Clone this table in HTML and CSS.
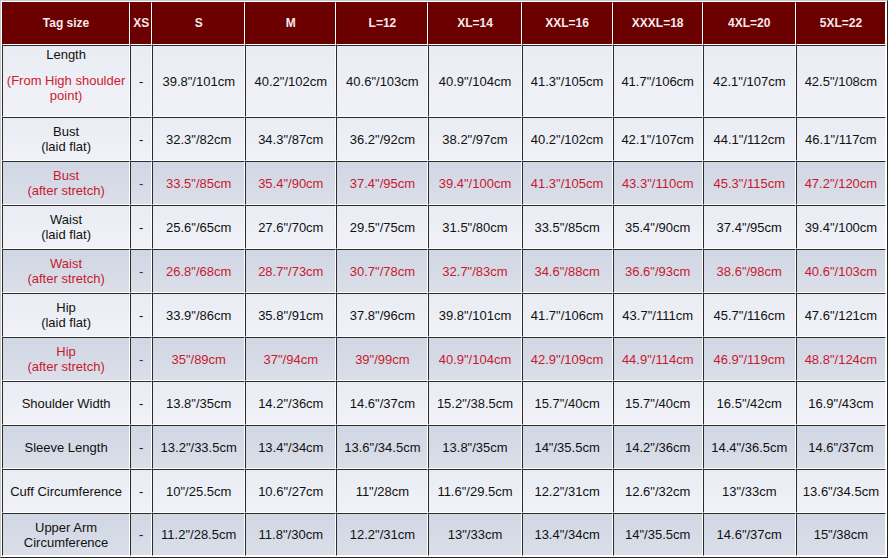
FILE: index.html
```html
<!DOCTYPE html>
<html>
<head>
<meta charset="utf-8">
<link rel="stylesheet" href="styles.css">
</head>
<body>
<table class="size-table">
  <colgroup>
    <col class="c-label"><col class="c-xs"><col class="c-93"><col class="c-91"><col class="c-92"><col class="c-93"><col class="c-91"><col class="c-90"><col class="c-93"><col class="c-90">
  </colgroup>
  <thead>
    <tr class="head">
      <th>Tag size</th><th>XS</th><th>S</th><th>M</th><th>L=12</th><th>XL=14</th><th>XXL=16</th><th>XXXL=18</th><th>4XL=20</th><th>5XL=22</th>
    </tr>
  </thead>
  <tbody>
    <tr class="light tall">
      <td class="length">Length<span class="note">(From High shoulder point)</span></td><td>-</td>
      <td>39.8"/101cm</td><td>40.2"/102cm</td><td>40.6"/103cm</td><td>40.9"/104cm</td><td>41.3"/105cm</td><td>41.7"/106cm</td><td>42.1"/107cm</td><td>42.5"/108cm</td>
    </tr>
    <tr class="light">
      <td>Bust<br>(laid flat)</td><td>-</td>
      <td>32.3"/82cm</td><td>34.3"/87cm</td><td>36.2"/92cm</td><td>38.2"/97cm</td><td>40.2"/102cm</td><td>42.1"/107cm</td><td>44.1"/112cm</td><td>46.1"/117cm</td>
    </tr>
    <tr class="dark red">
      <td>Bust<br>(after stretch)</td><td class="dash">-</td>
      <td>33.5"/85cm</td><td>35.4"/90cm</td><td>37.4"/95cm</td><td>39.4"/100cm</td><td>41.3"/105cm</td><td>43.3"/110cm</td><td>45.3"/115cm</td><td>47.2"/120cm</td>
    </tr>
    <tr class="light">
      <td>Waist<br>(laid flat)</td><td>-</td>
      <td>25.6"/65cm</td><td>27.6"/70cm</td><td>29.5"/75cm</td><td>31.5"/80cm</td><td>33.5"/85cm</td><td>35.4"/90cm</td><td>37.4"/95cm</td><td>39.4"/100cm</td>
    </tr>
    <tr class="dark red">
      <td>Waist<br>(after stretch)</td><td class="dash">-</td>
      <td>26.8"/68cm</td><td>28.7"/73cm</td><td>30.7"/78cm</td><td>32.7"/83cm</td><td>34.6"/88cm</td><td>36.6"/93cm</td><td>38.6"/98cm</td><td>40.6"/103cm</td>
    </tr>
    <tr class="light">
      <td>Hip<br>(laid flat)</td><td>-</td>
      <td>33.9"/86cm</td><td>35.8"/91cm</td><td>37.8"/96cm</td><td>39.8"/101cm</td><td>41.7"/106cm</td><td>43.7"/111cm</td><td>45.7"/116cm</td><td>47.6"/121cm</td>
    </tr>
    <tr class="dark red">
      <td>Hip<br>(after stretch)</td><td class="dash">-</td>
      <td>35"/89cm</td><td>37"/94cm</td><td>39"/99cm</td><td>40.9"/104cm</td><td>42.9"/109cm</td><td>44.9"/114cm</td><td>46.9"/119cm</td><td>48.8"/124cm</td>
    </tr>
    <tr class="light">
      <td>Shoulder Width</td><td>-</td>
      <td>13.8"/35cm</td><td>14.2"/36cm</td><td>14.6"/37cm</td><td>15.2"/38.5cm</td><td>15.7"/40cm</td><td>15.7"/40cm</td><td>16.5"/42cm</td><td>16.9"/43cm</td>
    </tr>
    <tr class="dark">
      <td>Sleeve Length</td><td>-</td>
      <td>13.2"/33.5cm</td><td>13.4"/34cm</td><td>13.6"/34.5cm</td><td>13.8"/35cm</td><td>14"/35.5cm</td><td>14.2"/36cm</td><td>14.4"/36.5cm</td><td>14.6"/37cm</td>
    </tr>
    <tr class="light">
      <td>Cuff Circumference</td><td>-</td>
      <td>10"/25.5cm</td><td>10.6"/27cm</td><td>11"/28cm</td><td>11.6"/29.5cm</td><td>12.2"/31cm</td><td>12.6"/32cm</td><td>13"/33cm</td><td>13.6"/34.5cm</td>
    </tr>
    <tr class="dark last">
      <td>Upper Arm<br>Circumference</td><td>-</td>
      <td>11.2"/28.5cm</td><td>11.8"/30cm</td><td>12.2"/31cm</td><td>13"/33cm</td><td>13.4"/34cm</td><td>14"/35.5cm</td><td>14.6"/37cm</td><td>15"/38cm</td>
    </tr>
  </tbody>
</table>
</body>
</html>
```

FILE: styles.css
```css
html, body {
  margin: 0;
  padding: 0;
  background: #ffffff;
}

.size-table {
  table-layout: fixed;
  border-collapse: separate;
  border-spacing: 0;
  width: 888px;
  padding: 1px;
  border-top: 1px solid #c9c9c9;
  border-left: 1px solid #c9c9c9;
  border-right: 1px solid #222;
  border-bottom: 1px solid #222;
  font-family: "Liberation Sans", Arial, sans-serif;
  font-size: 13px;
  color: #111;
}

.c-label { width: 128px; }
.c-xs { width: 22px; }
.c-93 { width: 93px; }
.c-91 { width: 91px; }
.c-92 { width: 92px; }
.c-90 { width: 90px; }

.size-table th,
.size-table td {
  box-sizing: border-box;
  padding: 0;
  text-align: center;
  vertical-align: middle;
  border-top: 1px solid #2b2b2b;
  border-left: 1px solid #2b2b2b;
  border-right: 1px solid #ffffff;
  border-bottom: 1px solid #ffffff;
  line-height: 15px;
}

.head { height: 43px; }
.head th {
  background: #6b0000;
  color: #f6eaea;
  font-size: 12px;
  font-weight: bold;
  border-top-color: #6b0000;
  border-left-color: #580000;
}

tbody tr { height: 44px; }
tbody tr.tall { height: 72px; }
tbody tr.last { height: 43px; }

.light td {
  background: linear-gradient(#e9ecf3, #f1f2f8);
}

.dark td {
  background: linear-gradient(#d0d6e3, #dadfe9);
}

.red td {
  color: #c8192f;
}

.red td.dash {
  color: #333;
}

.size-table td.length {
  padding-bottom: 12px;
}

.note {
  display: block;
  margin-top: 11px;
  color: #d0182f;
}
```
